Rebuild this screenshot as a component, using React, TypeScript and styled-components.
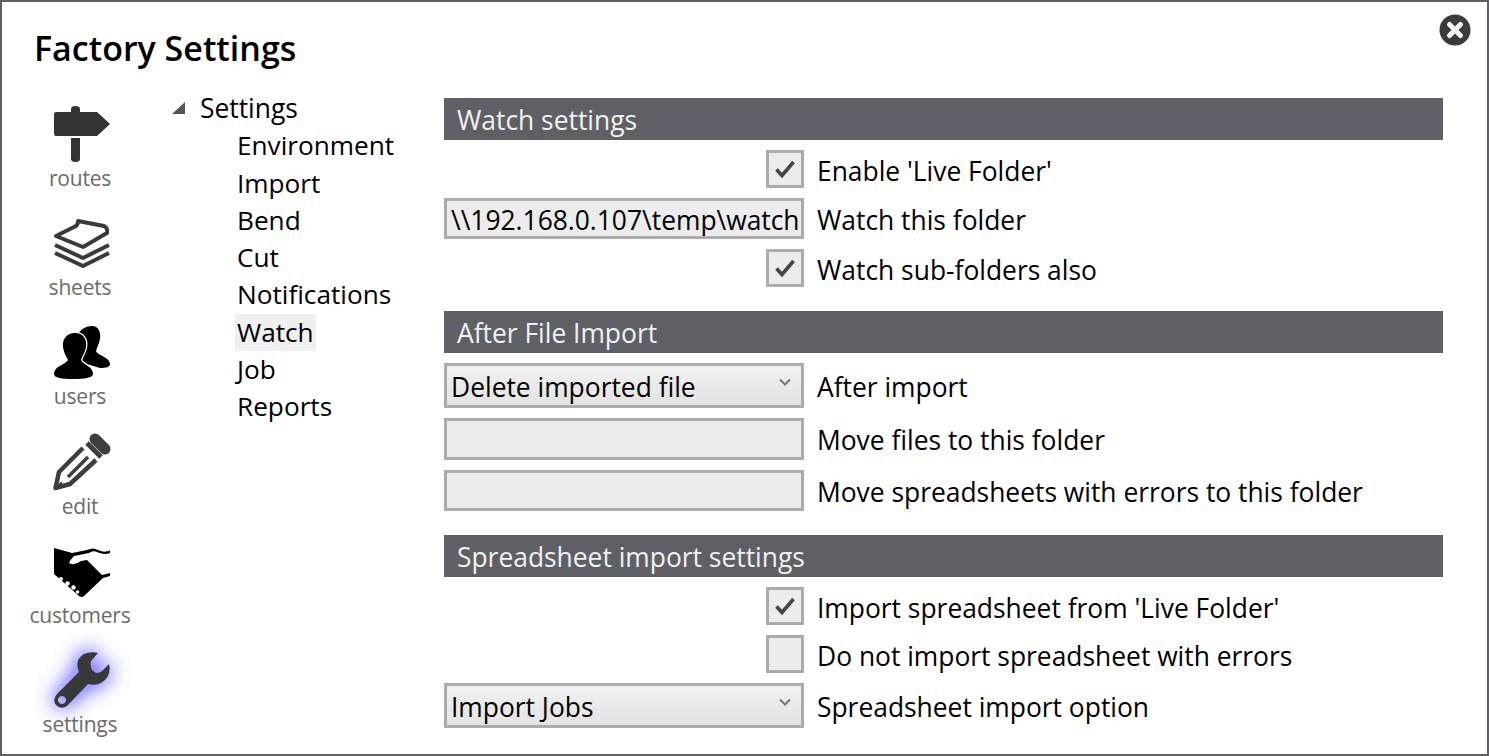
import React from "react";
import styled, { createGlobalStyle } from "styled-components";

const Global = createGlobalStyle`
  html, body { margin: 0; padding: 0; background: #fff; }
  body { font-family: "Open Sans", "Noto Sans", sans-serif; }
`;

const Frame = styled.div`
  position: relative;
  box-sizing: border-box;
  width: 1489px;
  height: 756px;
  border: 2px solid #5f6066;
  background: #fff;
  overflow: hidden;
`;

const Title = styled.h1`
  margin: 0;
  padding: 23px 0 0 32px;
  height: 70px;
  box-sizing: border-box;
  font-size: 34px;
  line-height: 46px;
  font-weight: 600;
  color: #000;
`;

const CloseButton = styled.div`
  position: absolute;
  top: 12px;
  right: 16px;
  width: 32px;
  height: 32px;
`;

const Body = styled.div`
  display: flex;
  align-items: flex-start;
`;

const Sidebar = styled.nav`
  width: 156px;
  flex: none;
  display: flex;
  flex-direction: column;
  padding-top: 34px;
`;

const NavItem = styled.div`
  height: 109.2px;
  display: flex;
  flex-direction: column;
  align-items: center;
  width: 156px;
`;

const NavIcon = styled.svg<{ $glow?: boolean }>`
  width: 56px;
  height: 56px;
  flex: none;
  margin-left: 4px;
  overflow: visible;
  ${(p) => p.$glow && "filter: drop-shadow(0 0 9px #7f7fff) drop-shadow(0 0 9px #9a9aff);"}
`;

const NavLabel = styled.span`
  font-size: 21px;
  line-height: 28px;
  margin-top: 2px;
  color: #6b6b6b;
  letter-spacing: -0.2px;
`;

const Tree = styled.div`
  width: 286px;
  flex: none;
  padding-top: 18px;
  padding-left: 14px;
  box-sizing: border-box;
`;

const TreeRoot = styled.div`
  box-sizing: border-box;
  display: flex;
  align-items: center;
  height: 37.3px;
  padding-bottom: 2px;
  font-size: 26.4px;
  color: #000;
`;

const Triangle = styled.span`
  width: 0;
  height: 0;
  margin-right: 15px;
  border-style: solid;
  border-width: 0 0 12px 13px;
  border-color: transparent transparent #555 transparent;
`;

const TreeChild = styled.div`
  height: 37.3px;
  line-height: 37.3px;
  margin-left: 63px;
  font-size: 26.2px;
  color: #000;
`;

const TreeLabel = styled.span<{ $selected?: boolean }>`
  display: inline-block;
  padding: 0 2px;
  background: ${(p) => (p.$selected ? "#f0f0f0" : "transparent")};
`;

const Content = styled.main`
  width: 999px;
  flex: none;
  padding-top: 26px;
  display: flex;
  flex-direction: column;
  gap: 24px;
`;

const Section = styled.section`
  display: flex;
  flex-direction: column;
  gap: 10px;
`;

const SectionHeader = styled.h2`
  margin: 0;
  height: 42px;
  line-height: 44px;
  padding-left: 13px;
  background: #5f6066;
  color: #f1f1f1;
  font-size: 26.4px;
  font-weight: 400;
`;

const Row = styled.div`
  display: grid;
  grid-template-columns: 360px 1fr;
  column-gap: 13px;
  align-items: center;
`;

const Control = styled.div`
  display: flex;
  justify-content: flex-end;
`;

const Label = styled.span`
  font-size: 26.4px;
  line-height: 34px;
  padding-top: 3px;
  color: #000;
`;

const CheckBox = styled.div`
  box-sizing: border-box;
  width: 38px;
  height: 38px;
  border: 3px solid #ababab;
  background: #ececec;
  display: flex;
  align-items: center;
  justify-content: center;
`;

const Field = styled.div<{ $h?: number }>`
  box-sizing: border-box;
  width: 360px;
  height: ${(p) => p.$h ?? 41}px;
  border: 3px solid #ababab;
  background: #ececec;
  padding-left: 4px;
  font-size: 26.4px;
  line-height: 38px;
  color: #000;
  white-space: nowrap;
  overflow: hidden;
`;

const Select = styled.div`
  box-sizing: border-box;
  width: 360px;
  height: 45px;
  border: 3px solid #ababab;
  background: linear-gradient(#f1f1f1, #e3e3e3);
  padding: 2px 10px 0 4px;
  font-size: 26.4px;
  color: #000;
  display: flex;
  align-items: center;
  justify-content: space-between;
`;

const TickMark = styled.svg`
  filter: blur(0.5px);
`;

const ChevronMark = styled.svg`
  margin-bottom: 10px;
`;

const Chevron = () => (
  <ChevronMark width="12" height="8" viewBox="0 0 12 8">
    <path d="M1 1.5 L6 6.5 L11 1.5" fill="none" stroke="#777" strokeWidth="2" />
  </ChevronMark>
);

const Tick = () => (
  <TickMark width="24" height="20" viewBox="0 0 24 20">
    <path d="M3.5 10.5 L9 16.5 L20.5 3" fill="none" stroke="#454545" strokeWidth="3.6" />
  </TickMark>
);

const Check = () => (
  <CheckBox>
    <Tick />
  </CheckBox>
);

const Routes = () => (
  <NavIcon viewBox="0 0 56 56">
    <path
      d="M17 3 Q17 0 21.5 0 Q26 0 26 3 V6 H43 L56 18 L43 30 H2 Q0 30 0 28 V8 Q0 6 2 6 H17Z M17 32 H26 V53 Q26 56 21.5 56 Q17 56 17 53Z"
      fill="#333"
    />
  </NavIcon>
);

const Sheets = () => (
  <NavIcon viewBox="0 0 56 56">
    <g transform="translate(0,4)" fill="none" stroke="#3a3a3a" strokeWidth="4" strokeLinejoin="round">
      <path d="M2 17 L20 8 Q24 7 24 2 L50 7 Q54 9 53 14 L29 28 Z" />
      <path d="M1 26 L29 39 L55 26" />
      <path d="M1 34 L29 47 L55 34" />
    </g>
  </NavIcon>
);

const Users = () => (
  <NavIcon viewBox="0 0 56 56">
    <g transform="translate(0,2)">
      <path
        d="M38 0 C45 0 47 7 46 13 C45 18 43 21 42 25 C44 30 56 31 56 38 C56 41 52 42 46 42 L26 36 L24 8 C27 3 32 0 38 0Z"
        fill="#000"
      />
      <path
        d="M21 7 C30 7 33 14 32 21 C31 27 28 30 27 34 C29 39 39 40 39 48 C39 52 30 53 19 53 C8 53 0 52 0 48 C0 40 11 39 14 34 C12 30 10 27 9 21 C8 14 12 7 21 7Z"
        fill="#000"
        stroke="#fff"
        strokeWidth="2.5"
        paintOrder="stroke"
      />
    </g>
  </NavIcon>
);

const Edit = () => (
  <NavIcon viewBox="0 0 56 56">
    <g fill="none" stroke="#3e3e3e" strokeLinejoin="round">
      <path d="M41 5 L51 15" strokeWidth="11" strokeLinecap="round" />
      <path d="M33 9 L47 23" strokeWidth="5" />
      <path d="M29 14 L5 38 L1.5 54 L16 50 L42 26" strokeWidth="4.5" />
      <path d="M14 43 L34 23" strokeWidth="3.5" />
      <path d="M2 54 L7 48 L9 52Z" fill="#3e3e3e" strokeWidth="1" />
    </g>
  </NavIcon>
);

const Customers = () => (
  <NavIcon viewBox="0 0 56 56">
    <g transform="translate(0,4)">
      <path
        d="M0 1 L18 6 L33 3 Q39 0 44 3 Q50 6 56 3.5 V6 Q50 8 44 5.5 Q39 3 35 6 L20 9 Q16 13 15 16 Q20 19 27 14 L33 13 L48 28 L56 26 V29 L49 31 L30 49 Q28 51 25 49 L0 27Z"
        fill="#000"
      />
      <g fill="#fff">
        <circle cx="7" cy="32" r="2" />
        <circle cx="13.5" cy="36.5" r="2.2" />
        <circle cx="19.5" cy="40.5" r="2.2" />
        <circle cx="23.5" cy="45" r="1.8" />
      </g>
    </g>
  </NavIcon>
);

const Wrench = () => (
  <NavIcon viewBox="0 0 56 56" $glow>
    <path
      fillRule="evenodd"
      d="M44 1 L37 9 Q36 14 38 18 L42 21 Q46 21 48 19 L55 12 Q58 24 47 31 Q41 34 34 32 L13 54 Q7 58 2 53 Q-2 48 3 42 L25 20 Q20 8 30 2 Q37 -1 44 1Z M8 44 A4 4 0 1 0 8.01 44Z"
      fill="#383838"
    />
  </NavIcon>
);

const navItems = [
  { label: "routes", Icon: Routes },
  { label: "sheets", Icon: Sheets },
  { label: "users", Icon: Users },
  { label: "edit", Icon: Edit },
  { label: "customers", Icon: Customers },
  { label: "settings", Icon: Wrench },
];

const treeItems = ["Environment", "Import", "Bend", "Cut", "Notifications", "Watch", "Job", "Reports"];

export default function App() {
  return (
    <Frame>
      <Global />
      <Title>Factory Settings</Title>
      <CloseButton>
        <svg width="32" height="32" viewBox="0 0 32 32">
          <circle cx="16" cy="16" r="15.5" fill="#3b3b3b" />
          <path d="M10.5 10.5 L21.5 21.5 M21.5 10.5 L10.5 21.5" stroke="#f4f4f4" strokeWidth="5" strokeLinecap="round" />
        </svg>
      </CloseButton>
      <Body>
        <Sidebar>
          {navItems.map(({ label, Icon }) => (
            <NavItem key={label}>
              <Icon />
              <NavLabel>{label}</NavLabel>
            </NavItem>
          ))}
        </Sidebar>
        <Tree>
          <TreeRoot>
            <Triangle />
            Settings
          </TreeRoot>
          {treeItems.map((t) => (
            <TreeChild key={t}>
              <TreeLabel $selected={t === "Watch"}>{t}</TreeLabel>
            </TreeChild>
          ))}
        </Tree>
        <Content>
          <Section>
            <SectionHeader>Watch settings</SectionHeader>
            <Row>
              <Control><Check /></Control>
              <Label>Enable 'Live Folder'</Label>
            </Row>
            <Row>
              <Field>\\192.168.0.107\temp\watch</Field>
              <Label>Watch this folder</Label>
            </Row>
            <Row>
              <Control><Check /></Control>
              <Label>Watch sub-folders also</Label>
            </Row>
          </Section>
          <Section>
            <SectionHeader>After File Import</SectionHeader>
            <Row>
              <Select>Delete imported file<Chevron /></Select>
              <Label>After import</Label>
            </Row>
            <Row>
              <Field $h={41.5} />
              <Label>Move files to this folder</Label>
            </Row>
            <Row>
              <Field $h={41.5} />
              <Label>Move spreadsheets with errors to this folder</Label>
            </Row>
          </Section>
          <Section>
            <SectionHeader>Spreadsheet import settings</SectionHeader>
            <Row>
              <Control><Check /></Control>
              <Label>Import spreadsheet from 'Live Folder'</Label>
            </Row>
            <Row>
              <Control><CheckBox /></Control>
              <Label>Do not import spreadsheet with errors</Label>
            </Row>
            <Row>
              <Select>Import Jobs<Chevron /></Select>
              <Label>Spreadsheet import option</Label>
            </Row>
          </Section>
        </Content>
      </Body>
    </Frame>
  );
}
